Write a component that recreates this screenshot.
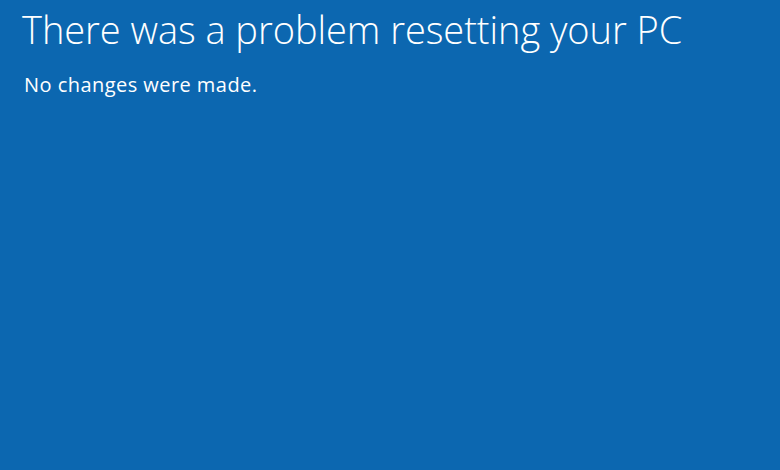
export default function App() {
  return (
    <div className="w-[780px] h-[470px] bg-[#0c67b0] text-white px-[22px] pt-[3px]" style={{ fontFamily: '"Open Sans", "Noto Sans", sans-serif' }}>
      <h1 className="text-[38px] font-light leading-[52px] tracking-[-0.05px]">There was a problem resetting your PC</h1>
      <p className="mt-[16px] ml-[2px] text-[20px] font-normal leading-[28px] tracking-[0.45px]">No changes were made.</p>
    </div>
  );
}
